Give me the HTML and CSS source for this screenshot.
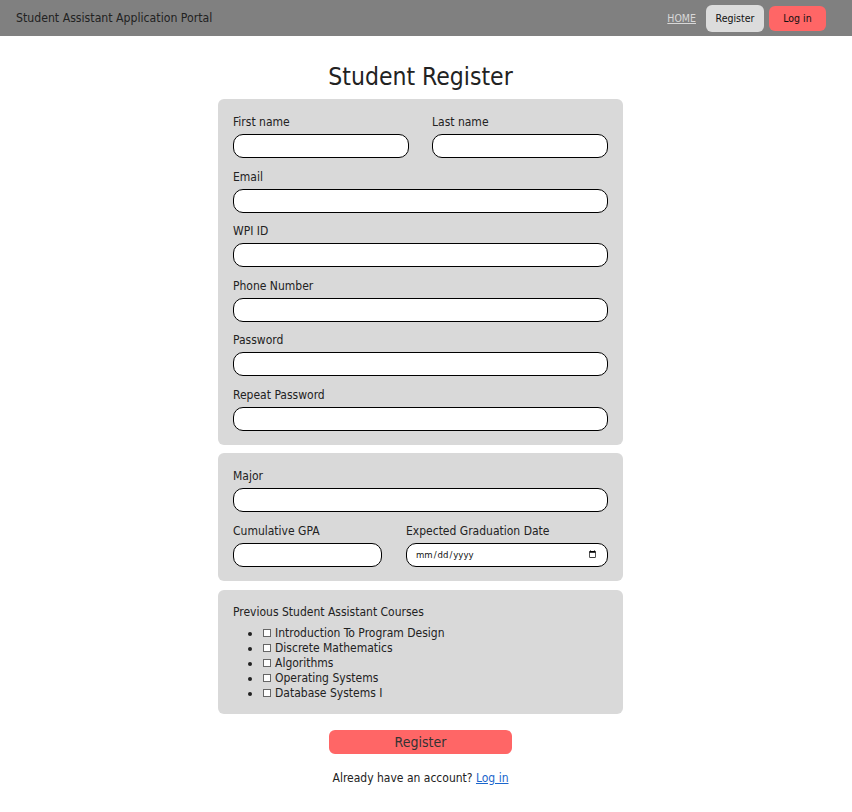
FILE: index.html
```html
<!DOCTYPE html>
<html lang="en">
<head>
<meta charset="utf-8">
<title>Student Register</title>
<link rel="stylesheet" href="styles.css">
</head>
<body>
<header class="topbar">
  <div class="brand">Student Assistant Application Portal</div>
  <nav class="nav">
    <a class="nav-home" href="#">HOME</a>
    <a class="nav-btn nav-register" href="#">Register</a>
    <a class="nav-btn nav-login" href="#">Log in</a>
  </nav>
</header>
<div class="wrap">
  <main class="main">
    <h1 class="title">Student Register</h1>
    <form class="form">
      <section class="panel">
        <div class="row">
          <div class="field">
            <label class="label">First name</label>
            <input class="input" type="text">
          </div>
          <div class="field">
            <label class="label">Last name</label>
            <input class="input" type="text">
          </div>
        </div>
        <div class="field">
          <label class="label">Email</label>
          <input class="input" type="email">
        </div>
        <div class="field">
          <label class="label">WPI ID</label>
          <input class="input" type="text">
        </div>
        <div class="field">
          <label class="label">Phone Number</label>
          <input class="input" type="text">
        </div>
        <div class="field">
          <label class="label">Password</label>
          <input class="input" type="password">
        </div>
        <div class="field">
          <label class="label">Repeat Password</label>
          <input class="input" type="password">
        </div>
      </section>
      <section class="panel panel-study">
        <div class="field">
          <label class="label">Major</label>
          <input class="input" type="text">
        </div>
        <div class="row row-b">
          <div class="field field-gpa">
            <label class="label">Cumulative GPA</label>
            <input class="input" type="text">
          </div>
          <div class="field field-date">
            <label class="label">Expected Graduation Date</label>
            <input class="input input-date" type="date">
          </div>
        </div>
      </section>
      <section class="panel panel-courses">
        <div class="label label-courses">Previous Student Assistant Courses</div>
        <ul class="courses">
          <li><input class="check" type="checkbox">Introduction To Program Design</li>
          <li><input class="check" type="checkbox">Discrete Mathematics</li>
          <li><input class="check" type="checkbox">Algorithms</li>
          <li><input class="check" type="checkbox">Operating Systems</li>
          <li><input class="check" type="checkbox">Database Systems I</li>
        </ul>
      </section>
      <div class="actions">
        <button class="submit" type="button">Register</button>
        <p class="already">Already have an account? <a href="#">Log in</a></p>
      </div>
    </form>
  </main>
</div>
</body>
</html>
```
FILE: styles.css
```css
* { box-sizing: border-box; }
html, body { margin: 0; padding: 0; background: #fff; }
body {
  font-family: "DejaVu Sans Condensed", "DejaVu Sans", sans-serif;
  color: #222;
  font-size: 12px;
}
.topbar {
  height: 36px;
  background: #808080;
  display: flex;
  align-items: center;
  justify-content: space-between;
  padding: 0 26px 0 16px;
}
.brand { font-size: 12.2px; color: #222; }
.nav { display: flex; align-items: center; }
.nav-home {
  font-size: 10.5px;
  color: #d8d8d8;
  text-decoration: underline;
  margin-right: 10px;
}
.nav-btn {
  display: flex;
  align-items: center;
  justify-content: center;
  height: 27px;
  border-radius: 6px;
  font-size: 10.5px;
  color: #111;
  text-decoration: none;
}
.nav-register { width: 58px; background: #dcdcdc; margin-right: 5px; }
.nav-login { width: 57px; height: 25px; background: #ff6666; }

.wrap { padding-right: 11px; }
.main { width: 405px; margin: 0 auto; }
.title {
  margin: 26px 0 7px;
  font-size: 24.5px;
  line-height: 30px;
  font-weight: normal;
  text-align: center;
  color: #222;
}
.form { display: flex; flex-direction: column; }
.panel {
  background: #d9d9d9;
  border-radius: 6px;
  padding: 15px 15px 14.5px;
  display: flex;
  flex-direction: column;
  gap: 10.5px;
  margin-bottom: 8px;
}
.panel-study { padding-bottom: 14px; }
.row { display: flex; gap: 23px; }
.row .field { flex: 1; }
.row-b { gap: 24px; }
.row-b .field-gpa { flex: 0 0 149px; }
.row-b .field-date { flex: 1; }
.field { display: flex; flex-direction: column; }
.label { display: block; line-height: 17px; margin-bottom: 3px; color: #222; }
.input {
  height: 24px;
  width: 100%;
  border: 1px solid #000;
  border-radius: 10px;
  background: #fff;
  padding: 0 8px;
  font-family: inherit;
  font-size: 11px;
  margin: 0;
  outline: none;
}
.input-date { font-size: 9.5px; color: #111; padding: 0 8px; }
.panel-courses { gap: 0; margin-top: 1px; padding: 14.5px 15px 12.5px; }
.label-courses { margin-bottom: 5px; }
.courses {
  margin: 0;
  padding-left: 29px;
  list-style: disc;
}
.courses li { line-height: 15px; color: #222; }
.check {
  appearance: none;
  -webkit-appearance: none;
  width: 8px;
  height: 8px;
  border: 1px solid #666;
  background: #fff;
  margin: 0 4px 0 1px;
  vertical-align: 0;
}
.actions {
  margin-top: 8px;
  display: flex;
  flex-direction: column;
  align-items: center;
}
.submit {
  width: 183px;
  height: 24px;
  border: none;
  border-radius: 6px;
  background: #ff6666;
  font-family: inherit;
  font-size: 14px;
  color: #333;
  padding: 0;
}
.already { margin: 16.5px 0 0; line-height: 17px; color: #222; }
.already a { color: #1a66cc; }
```
